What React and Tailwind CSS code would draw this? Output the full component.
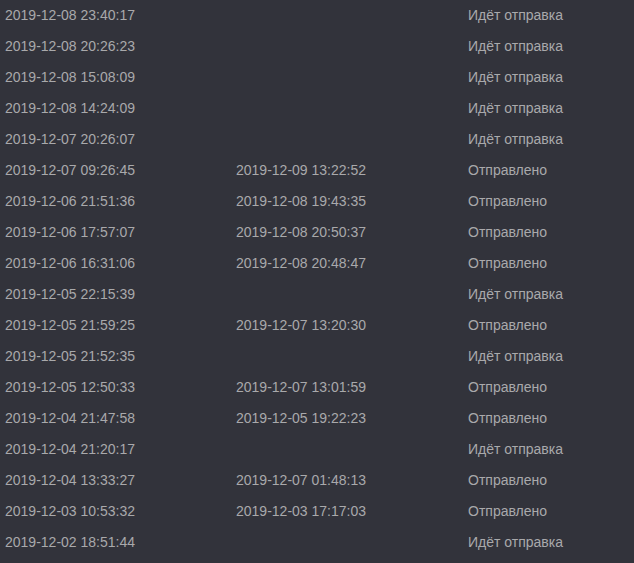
import React from 'react';

const SENDING = 'Идёт отправка';
const SENT = 'Отправлено';

const rows = [
  ['2019-12-08 23:40:17', '', SENDING],
  ['2019-12-08 20:26:23', '', SENDING],
  ['2019-12-08 15:08:09', '', SENDING],
  ['2019-12-08 14:24:09', '', SENDING],
  ['2019-12-07 20:26:07', '', SENDING],
  ['2019-12-07 09:26:45', '2019-12-09 13:22:52', SENT],
  ['2019-12-06 21:51:36', '2019-12-08 19:43:35', SENT],
  ['2019-12-06 17:57:07', '2019-12-08 20:50:37', SENT],
  ['2019-12-06 16:31:06', '2019-12-08 20:48:47', SENT],
  ['2019-12-05 22:15:39', '', SENDING],
  ['2019-12-05 21:59:25', '2019-12-07 13:20:30', SENT],
  ['2019-12-05 21:52:35', '', SENDING],
  ['2019-12-05 12:50:33', '2019-12-07 13:01:59', SENT],
  ['2019-12-04 21:47:58', '2019-12-05 19:22:23', SENT],
  ['2019-12-04 21:20:17', '', SENDING],
  ['2019-12-04 13:33:27', '2019-12-07 01:48:13', SENT],
  ['2019-12-03 10:53:32', '2019-12-03 17:17:03', SENT],
  ['2019-12-02 18:51:44', '', SENDING],
];

export default function App() {
  return (
    <div className="w-[634px] h-[563px] overflow-hidden bg-[#32333b] text-[#a9a9ab] text-[14px] font-['Liberation_Sans',Arial,sans-serif]">
      {rows.map(([created, delivered, status], i) => (
        <div key={i} className="grid grid-cols-[231px_232px_1fr] h-[31px] items-center pl-[5px]">
          <span>{created}</span>
          <span>{delivered}</span>
          <span>{status}</span>
        </div>
      ))}
    </div>
  );
}
